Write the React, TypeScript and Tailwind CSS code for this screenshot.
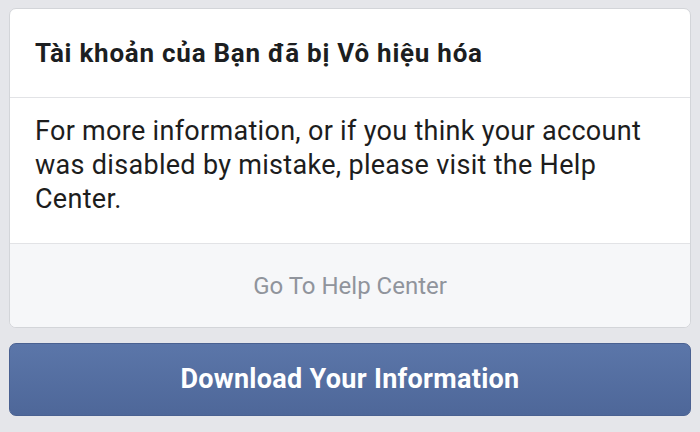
export default function App() {
  return (
    <div className="w-[700px] h-[432px] bg-[#e5e6ea] pt-[8px] px-[9px] overflow-hidden" style={{ fontFamily: 'Roboto, "Noto Sans", sans-serif' }}>
      <div className="bg-white rounded-[7px] border border-[#d3d5d9] overflow-hidden">
        <div className="h-[89px] flex items-center px-[25px] border-b border-[#e2e3e6]">
          <div className="text-[26px] font-bold text-[#1c1e21] leading-none tracking-[0.75px]">Tài khoản của Bạn đã bị Vô hiệu hóa</div>
        </div>
        <div className="h-[146px] px-[25px] pt-[16px] border-b border-[#e2e3e6]">
          <p className="text-[27px] leading-[34px] text-[#1d1d1d] tracking-[0.3px]">
            For more information, or if you think your account was disabled by mistake, please visit the Help Center.
          </p>
        </div>
        <div className="h-[83px] bg-[#f6f7f9] flex items-center justify-center">
          <span className="text-[24px] text-[#90949c]">Go To Help Center</span>
        </div>
      </div>
      <div className="mt-[15px] h-[73px] rounded-[7px] border border-[#4a6191] bg-gradient-to-b from-[#5b76a9] to-[#4e6799] flex items-center justify-center">
        <span className="text-[27px] font-bold text-white tracking-[0.3px]">Download Your Information</span>
      </div>
    </div>
  );
}
